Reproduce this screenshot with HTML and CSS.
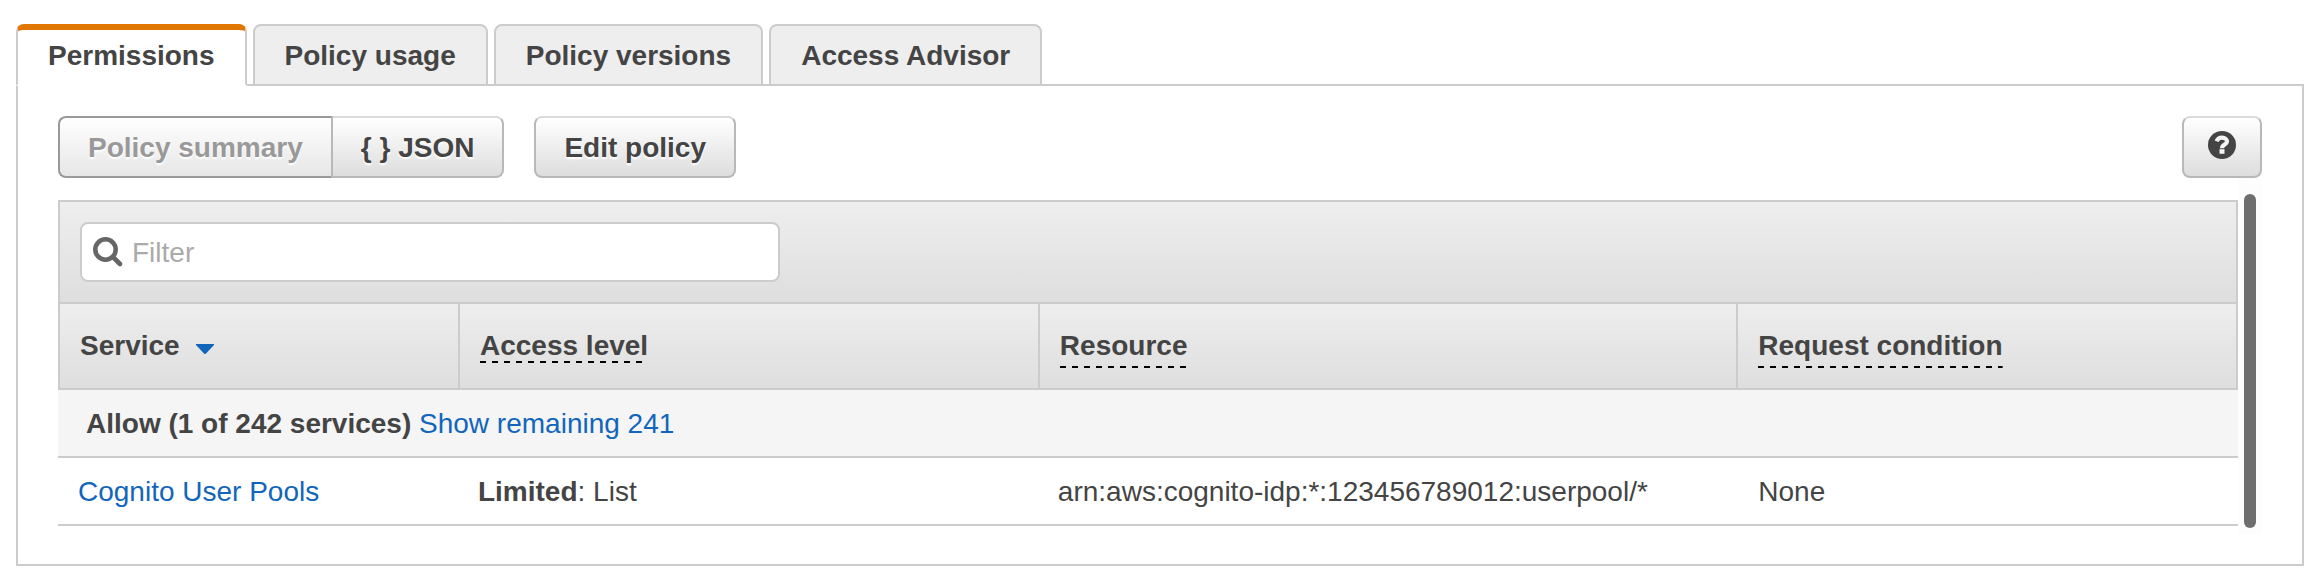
FILE: index.html
```html
<!DOCTYPE html>
<html lang="en">
<head>
<meta charset="utf-8">
<title>Policy permissions</title>
<link rel="stylesheet" href="styles.css">
</head>
<body>
<main class="page">
  <div class="tabs" role="tablist">
    <button class="tab tab-active" type="button" role="tab" aria-selected="true">Permissions</button>
    <button class="tab" type="button" role="tab" aria-selected="false">Policy usage</button>
    <button class="tab" type="button" role="tab" aria-selected="false">Policy versions</button>
    <button class="tab" type="button" role="tab" aria-selected="false">Access Advisor</button>
  </div>
  <section class="panel" role="tabpanel">
    <div class="toolbar">
      <div class="button-group">
        <button class="button button-current" type="button" disabled>Policy summary</button>
        <button class="button" type="button">{ } JSON</button>
      </div>
      <button class="button" type="button">Edit policy</button>
      <button class="button button-help" type="button" aria-label="Help">
        <svg class="help-icon" viewBox="0 0 28 28" aria-hidden="true">
          <circle cx="14" cy="14" r="14" fill="#444"/>
          <path d="M8.600 10.200C9.600 7.800 11.400 6.700 14 6.700C17 6.700 19 8.400 19 10.600C19 13.600 14 13.600 14 17.200" fill="none" stroke="#f4f4f4" stroke-width="4.200"/>
          <path d="M11.500 18.200h5v4.600h-5z" fill="#f4f4f4"/>
        </svg>
      </button>
    </div>
    <div class="scroll-area">
      <div class="summary">
        <div class="filter-bar">
          <label class="filter">
            <svg class="search-icon" viewBox="0 0 30 30" aria-hidden="true">
              <circle cx="12.500" cy="12.500" r="10.200" fill="none" stroke="#666" stroke-width="4.600"/>
              <path d="M20 20L27 27" stroke="#666" stroke-width="4.600" stroke-linecap="round"/>
            </svg>
            <input class="filter-input" type="text" placeholder="Filter" aria-label="Filter">
          </label>
        </div>
        <table class="services">
          <colgroup>
            <col class="col-service"><col class="col-access"><col class="col-resource"><col class="col-condition">
          </colgroup>
          <thead>
            <tr>
              <th scope="col">Service<svg class="sort-icon" viewBox="0 0 18 11" aria-hidden="true"><path d="M0 0H18V1L10 9.500Q9 10.500 8 9.500L0 1Z" fill="#1166bb"/></svg></th>
              <th scope="col"><span class="hint">Access level</span></th>
              <th scope="col"><span class="hint hint-block">Resource</span></th>
              <th scope="col"><span class="hint hint-block">Request condition</span></th>
            </tr>
          </thead>
          <tbody>
            <tr class="group-row">
              <td colspan="4"><strong>Allow (1 of 242 services)</strong> <a class="link" href="#">Show remaining 241</a></td>
            </tr>
            <tr>
              <td><a class="link" href="#">Cognito User Pools</a></td>
              <td><strong>Limited</strong>: List</td>
              <td>arn:aws:cognito-idp:*:123456789012:userpool/*</td>
              <td>None</td>
            </tr>
          </tbody>
        </table>
      </div>
      <div class="scroll-track"><div class="scroll-thumb"></div></div>
    </div>
  </section>
</main>
</body>
</html>
```
FILE: styles.css
```css
* {
  box-sizing: border-box;
}

body {
  margin: 0;
  background: #fff;
  color: #444;
  font: 28px/42px "Liberation Sans", Arial, sans-serif;
}

button,
input {
  margin: 0;
  color: inherit;
  font: inherit;
}

.page {
  padding: 24px 4px 14px 16px;
}

.tabs {
  display: flex;
  align-items: stretch;
  gap: 6px;
  margin-bottom: -2px;
}

.tab {
  padding: 9px 30px 7px;
  border: 2px solid #ccc;
  border-radius: 8px 8px 0 0;
  background: #eee;
  font-weight: bold;
}

.tab-active {
  padding-top: 5px;
  border-top: 6px solid #e07700;
  border-bottom-color: #fff;
  background: #fff;
}

.panel {
  padding: 30px 40px;
  border: 2px solid #ccc;
}

.toolbar {
  display: flex;
  gap: 30px;
}

.button-group {
  display: flex;
}

.button {
  height: 62px;
  padding: 2px 28px 0;
  border: 2px solid #b8b8b8;
  border-top-color: #dbdbdb;
  border-radius: 8px;
  background: linear-gradient(#fff, #ddd);
  font-weight: bold;
  text-shadow: 0 2px 2px #fff;
}

.button-group .button:first-child {
  border-radius: 8px 0 0 8px;
}

.button-group .button:last-child {
  border-left: 0;
  border-radius: 0 8px 8px 0;
}

.button-current {
  border-color: #999;
  border-right-color: #b8b8b8;
  background: linear-gradient(#fff, #e6e6e6);
  color: #999;
}

.button-help {
  display: flex;
  align-items: center;
  justify-content: center;
  width: 80px;
  margin-left: auto;
  padding: 0 0 4px;
}

.help-icon {
  width: 28px;
  height: 28px;
}

.scroll-area {
  display: flex;
}

.summary {
  flex: 1;
  padding: 22px 0 8px;
}

.filter-bar {
  padding: 20px;
  border: 2px solid #ccc;
  border-bottom: 0;
  background: linear-gradient(#eee, #dedede);
}

.filter {
  display: flex;
  align-items: center;
  gap: 9px;
  width: 32.75%;
  height: 60px;
  padding: 0 11px;
  border: 2px solid #ccc;
  border-radius: 8px;
  background: #fff;
}

.search-icon {
  flex: none;
  width: 30px;
  height: 30px;
}

.filter-input {
  flex: 1;
  min-width: 0;
  padding: 2px 0 0;
  border: 0;
  outline: 0;
  background: transparent;
}

.filter-input::placeholder {
  color: #aaa;
  opacity: 1;
}

.services {
  width: 100%;
  border-collapse: separate;
  border-spacing: 0;
  table-layout: fixed;
}

.col-service {
  width: 18.44%;
}

.col-access {
  width: 26.6%;
}

.col-resource {
  width: 32.04%;
}

.services th {
  height: 88px;
  padding: 21px 20px 19px;
  border: solid #ccc;
  border-width: 2px 2px 2px 0;
  background: linear-gradient(#eee, #dedede);
  text-align: left;
  vertical-align: top;
}

.services th:first-child {
  border-left-width: 2px;
}

.services td {
  padding: 13px 18px 11px;
  border-bottom: 2px solid #ccc;
}

.services td:first-child,
.services td:last-child {
  padding-left: 20px;
}

.services .group-row td {
  padding-left: 28px;
  background: #f5f5f5;
}

.sort-icon {
  width: 18px;
  height: 11px;
  margin-left: 16px;
}

/* Dashed underline, six pixels on and six off */
.hint {
  padding-bottom: 2px;
  background: repeating-linear-gradient(90deg, #000 0 6px, transparent 6px 12px) bottom / 100% 2px no-repeat;
}

.hint-block {
  display: inline-block;
  line-height: 40px;
}

.link {
  color: #1166bb;
  text-decoration: none;
}

.scroll-track {
  width: 24px;
  padding: 16px 6px 6px;
  background: #fdfdfd;
}

.scroll-thumb {
  height: 100%;
  border-radius: 6px;
  background: #6e6e6e;
}
```
